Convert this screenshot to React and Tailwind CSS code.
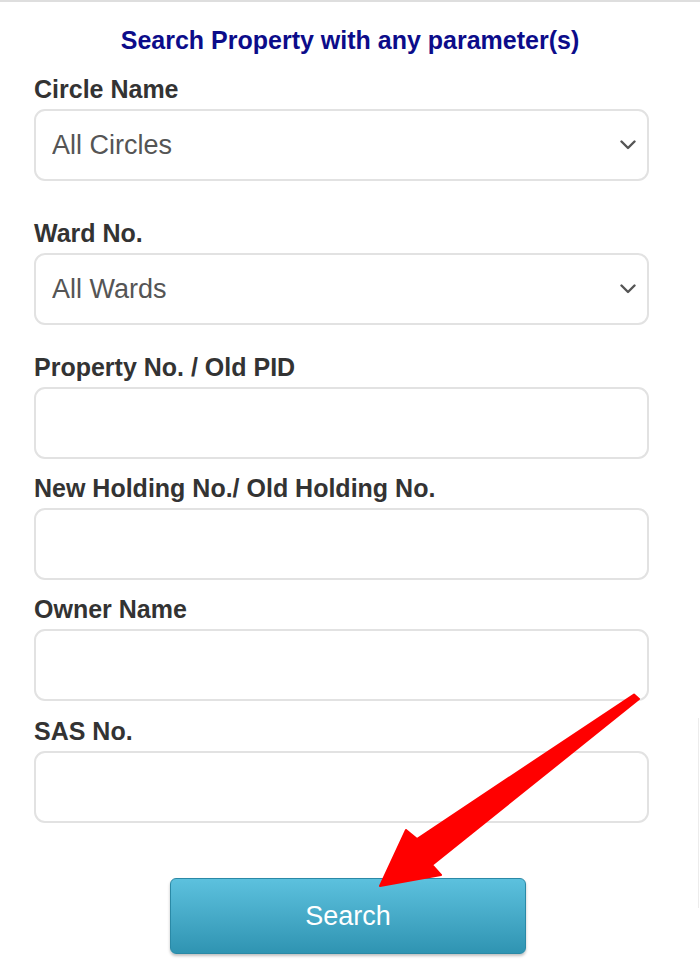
import React from 'react';

const font = { fontFamily: '"Liberation Sans", Arial, sans-serif' };

const Chevron = () => (
  <svg
    className="pointer-events-none absolute right-[13px] top-1/2 -translate-y-1/2"
    width="16"
    height="10"
    viewBox="0 0 16 10"
    fill="none"
  >
    <path d="M1.5 1.5 L8 8 L14.5 1.5" stroke="#555" strokeWidth="2.4" strokeLinecap="round" strokeLinejoin="round" />
  </svg>
);

const Label = ({ children }) => (
  <label className="block h-[30px] mb-[5px] text-[25px] leading-[30px] font-bold text-[#333]">{children}</label>
);

const SelectField = ({ label, value, className }) => (
  <div className={className}>
    <Label>{label}</Label>
    <div className="relative w-[615px] h-[72px]">
      <select
        defaultValue={value}
        className="appearance-none w-full h-full rounded-[11px] border-2 border-[#e2e2e2] bg-white pl-4 text-[27px] text-[#555] outline-none"
        style={font}
      >
        <option>{value}</option>
      </select>
      <Chevron />
    </div>
  </div>
);

const InputField = ({ label, className }) => (
  <div className={className}>
    <Label>{label}</Label>
    <input
      type="text"
      className="block w-[615px] h-[72px] rounded-[11px] border-2 border-[#e2e2e2] bg-white px-4 text-[27px] outline-none"
    />
  </div>
);

const Arrow = () => (
  <svg className="pointer-events-none absolute left-0 top-0" width="700" height="959" viewBox="0 0 700 959">
    <polygon
      points="634,692.5 639,697 432,863 441,873 380,884 406,828 417,837"
      fill="#ff0000"
      stroke="#ff0000"
      strokeWidth="2"
      strokeLinejoin="round"
    />
  </svg>
);

export default function App() {
  return (
    <div className="relative w-[700px] h-[959px] bg-white border-t-2 border-[#dedede] overflow-hidden" style={font}>
      <h2 className="mt-[23px] h-[30px] text-center text-[25px] leading-[30px] font-bold text-[#0c0c8a]">
        Search Property with any parameter(s)
      </h2>

      <form className="pl-[34px] mt-[19px]">
        <SelectField label="Circle Name" value="All Circles" />
        <SelectField label="Ward No." value="All Wards" className="mt-[37px]" />
        <InputField label="Property No. / Old PID" className="mt-[27px]" />
        <InputField label="New Holding No./ Old Holding No." className="mt-[14px]" />
        <InputField label="Owner Name" className="mt-[14px]" />
        <InputField label="SAS No." className="mt-[15px]" />
      </form>

      <div className="mt-[55px] flex justify-center">
        <button
          type="button"
          className="ml-[-4px] w-[356px] h-[76px] rounded-[6px] border border-[#2a89a6] bg-gradient-to-b from-[#5cc1de] to-[#2f94b2] text-[27px] text-white shadow-[0_2px_3px_rgba(0,0,0,0.25)]"
        >
          Search
        </button>
      </div>

      <div className="absolute right-[1px] top-[716px] h-[190px] w-px bg-[#ececec]" />
      <Arrow />
    </div>
  );
}
